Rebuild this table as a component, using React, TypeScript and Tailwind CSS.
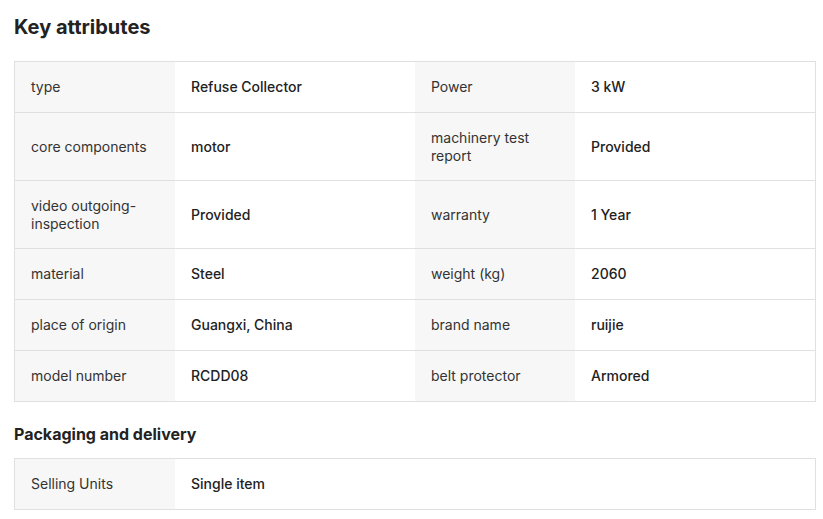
import React from 'react'

type Attr = { label: string; value: string }

const keyAttrs: Attr[][] = [
  [
    { label: 'type', value: 'Refuse Collector' },
    { label: 'Power', value: '3 kW' },
  ],
  [
    { label: 'core components', value: 'motor' },
    { label: 'machinery test report', value: 'Provided' },
  ],
  [
    { label: 'video outgoing-inspection', value: 'Provided' },
    { label: 'warranty', value: '1 Year' },
  ],
  [
    { label: 'material', value: 'Steel' },
    { label: 'weight (kg)', value: '2060' },
  ],
  [
    { label: 'place of origin', value: 'Guangxi, China' },
    { label: 'brand name', value: 'ruijie' },
  ],
  [
    { label: 'model number', value: 'RCDD08' },
    { label: 'belt protector', value: 'Armored' },
  ],
]

const packaging: Attr[][] = [[{ label: 'Selling Units', value: 'Single item' }]]

const Cell = ({ attr }: { attr: Attr }) => (
  <>
    <div className="flex items-center bg-[#f7f7f7] p-4 text-[14px] leading-[17.5px] text-[#333333]">
      {attr.label}
    </div>
    <div className="flex items-center p-4 text-[14px] leading-[17.5px] font-medium text-[#222222]">
      {attr.value}
    </div>
  </>
)

const AttrTable = ({ rows }: { rows: Attr[][] }) => (
  <div className="w-[802px] border border-[#e0e0e0]">
    {rows.map((row, i) => (
      <div
        key={i}
        className={`grid min-h-[50px] grid-cols-[160px_240px_160px_240px] ${
          i < rows.length - 1 ? 'min-h-[51px] border-b border-[#e0e0e0]' : ''
        }`}
      >
        {row.map((attr) => (
          <Cell key={attr.label} attr={attr} />
        ))}
      </div>
    ))}
  </div>
)

export default function App() {
  return (
    <div
      className="min-h-screen bg-white px-[14px] pt-[13px]"
      style={{ fontFamily: 'Inter, "Noto Sans", sans-serif' }}
    >
      <h2 className="text-[20px] leading-[28px] font-bold text-[#222222]">Key attributes</h2>
      <div className="mt-[20px]">
        <AttrTable rows={keyAttrs} />
      </div>
      <h3 className="mt-[20px] text-[16px] leading-[24px] font-bold text-[#222222]">
        Packaging and delivery
      </h3>
      <div className="mt-[12px]">
        <AttrTable rows={packaging} />
      </div>
    </div>
  )
}
